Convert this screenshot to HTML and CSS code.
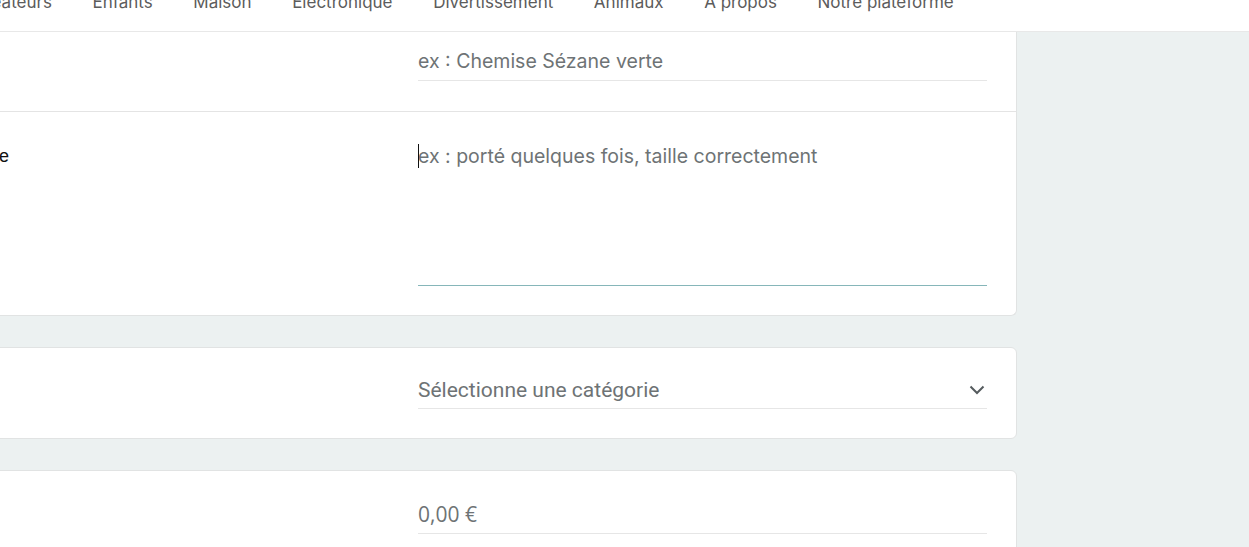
FILE: index.html
```html
<!DOCTYPE html>
<html lang="fr">
<head>
<meta charset="utf-8">
<title>Vendre un article</title>
<link rel="stylesheet" href="styles.css">
</head>
<body>
<header class="topbar">
  <nav class="nav">
    <a class="nav-link">Créateurs</a>
    <a class="nav-link">Enfants</a>
    <a class="nav-link">Maison</a>
    <a class="nav-link">Électronique</a>
    <a class="nav-link">Divertissement</a>
    <a class="nav-link">Animaux</a>
    <a class="nav-link">À propos</a>
    <a class="nav-link">Notre plateforme</a>
  </nav>
</header>
<main class="main">
  <section class="card card-first">
    <div class="row row-title">
      <label class="label">Titre</label>
      <div class="field"><input class="input input-inter" type="text" placeholder="ex : Chemise Sézane verte"></div>
    </div>
    <div class="row row-desc">
      <label class="label">Décris ton article</label>
      <div class="field"><textarea class="textarea" placeholder="ex : porté quelques fois, taille correctement"></textarea><span class="caret"></span></div>
    </div>
  </section>
  <section class="card">
    <div class="row">
      <label class="label">Catégorie</label>
      <div class="field select">
        <span class="select-text">Sélectionne une catégorie</span>
        <svg class="chevron" width="16" height="10" viewBox="0 0 16 10"><path d="M1.5 1.5 L8 8 L14.5 1.5" fill="none" stroke="#555b5e" stroke-width="2"/></svg>
      </div>
    </div>
  </section>
  <section class="card card-last">
    <div class="row">
      <label class="label">Prix</label>
      <div class="field"><input class="input input-open" type="text" placeholder="0,00 €"></div>
    </div>
  </section>
</main>
</body>
</html>
```
FILE: styles.css
```css
html, body {
  margin: 0;
  padding: 0;
  overflow: hidden;
  background: #ecf1f1;
  height: 547px;
}
.topbar {
  background: #ffffff;
  height: 31px;
  border-bottom: 1px solid #e8e8e8;
  overflow: hidden;
}
.nav {
  display: flex;
  gap: 40.6px;
  margin-top: -10px;
  margin-left: -27px;
}
.nav-link {
  font-family: Inter, "Noto Sans", sans-serif;
  font-size: 17px;
  line-height: 24px;
  color: #5c5c5c;
  white-space: nowrap;
}
.main {
  margin-left: -155px;
  width: 1172px;
  display: flex;
  flex-direction: column;
  gap: 31px;
}
.card {
  background: #ffffff;
  border: 1px solid #e1e3e3;
  border-radius: 6px;
}
.card-first {
  border-top: none;
  border-radius: 0 0 6px 6px;
}
.row {
  display: grid;
  grid-template-columns: 1fr 569px;
  padding: 29px;
}
.row-title {
  padding-top: 15px;
  padding-bottom: 30px;
  border-bottom: 1px solid #e4e4e4;
}
.label {
  font-family: "Liberation Sans", Arial, sans-serif;
  font-size: 18px;
  color: #111111;
  line-height: 30px;
}
.field {
  position: relative;
}
.input {
  display: block;
  width: 100%;
  box-sizing: border-box;
  height: 34px;
  border: none;
  border-bottom: 1px solid #e6e6e6;
  padding: 0 0 6px 0;
  margin: 0;
  outline: none;
  background: transparent;
  color: #222;
}
.input-inter {
  font-family: Inter, sans-serif;
  font-size: 19.5px;
}
.input-open {
  font-family: "Open Sans", sans-serif;
  font-size: 21px;
}
.input::placeholder {
  color: #6e7375;
  opacity: 1;
}
.textarea {
  display: block;
  width: 100%;
  box-sizing: border-box;
  height: 145px;
  border: none;
  border-bottom: 1px solid #86b6b9;
  padding: 0;
  margin: 0;
  outline: none;
  resize: none;
  background: transparent;
  font-family: Inter, sans-serif;
  font-size: 19.5px;
  line-height: 30px;
  color: #222;
}
.textarea::placeholder {
  color: #6e7375;
  opacity: 1;
}
.caret {
  position: absolute;
  left: 0;
  top: 3px;
  width: 1px;
  height: 24px;
  background: #111;
}
.select {
  display: flex;
  align-items: center;
  justify-content: space-between;
  height: 32px;
  box-sizing: border-box;
  padding-bottom: 6px;
  border-bottom: 1px solid #e6e6e6;
}
.select-text {
  font-family: Roboto, sans-serif;
  font-size: 21px;
  color: #6e7375;
}
.chevron {
  margin-right: 2px;
}
.card-last {
  height: 140px;
}
```
